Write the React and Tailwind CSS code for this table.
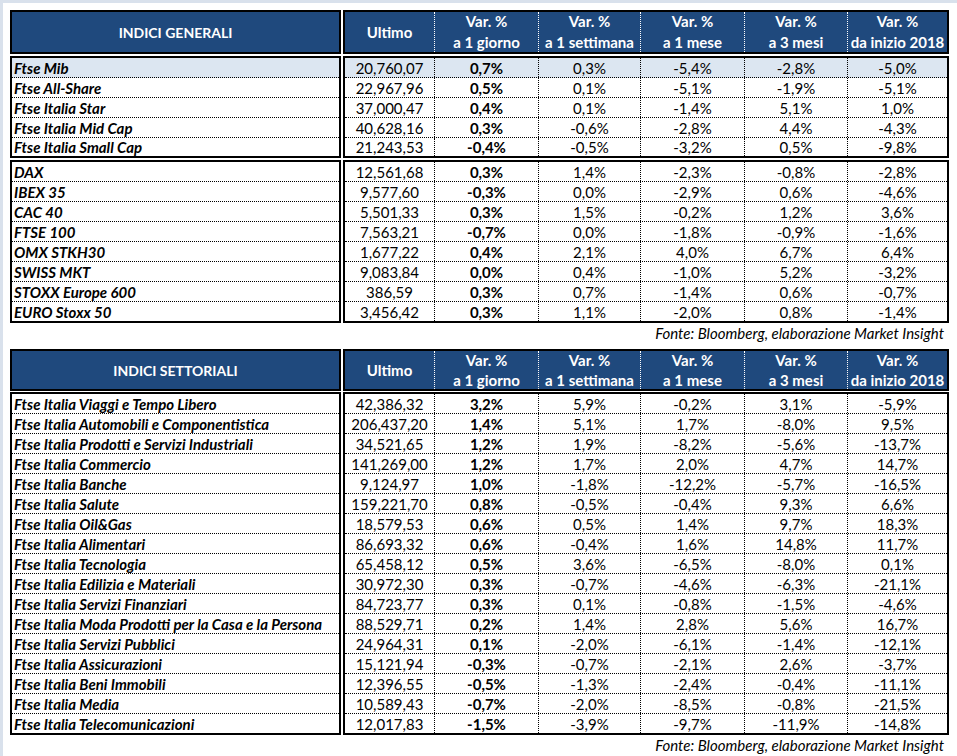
const generali1 = [
  ['Ftse Mib', '20,760,07', '0,7%', '0,3%', '-5,4%', '-2,8%', '-5,0%'],
  ['Ftse All-Share', '22,967,96', '0,5%', '0,1%', '-5,1%', '-1,9%', '-5,1%'],
  ['Ftse Italia Star', '37,000,47', '0,4%', '0,1%', '-1,4%', '5,1%', '1,0%'],
  ['Ftse Italia Mid Cap', '40,628,16', '0,3%', '-0,6%', '-2,8%', '4,4%', '-4,3%'],
  ['Ftse Italia Small Cap', '21,243,53', '-0,4%', '-0,5%', '-3,2%', '0,5%', '-9,8%'],
];

const generali2 = [
  ['DAX', '12,561,68', '0,3%', '1,4%', '-2,3%', '-0,8%', '-2,8%'],
  ['IBEX 35', '9,577,60', '-0,3%', '0,0%', '-2,9%', '0,6%', '-4,6%'],
  ['CAC 40', '5,501,33', '0,3%', '1,5%', '-0,2%', '1,2%', '3,6%'],
  ['FTSE 100', '7,563,21', '-0,7%', '0,0%', '-1,8%', '-0,9%', '-1,6%'],
  ['OMX STKH30', '1,677,22', '0,4%', '2,1%', '4,0%', '6,7%', '6,4%'],
  ['SWISS MKT', '9,083,84', '0,0%', '0,4%', '-1,0%', '5,2%', '-3,2%'],
  ['STOXX Europe 600', '386,59', '0,3%', '0,7%', '-1,4%', '0,6%', '-0,7%'],
  ['EURO Stoxx 50', '3,456,42', '0,3%', '1,1%', '-2,0%', '0,8%', '-1,4%'],
];

const settoriali = [
  ['Ftse Italia Viaggi e Tempo Libero', '42,386,32', '3,2%', '5,9%', '-0,2%', '3,1%', '-5,9%'],
  ['Ftse Italia Automobili e Componentistica', '206,437,20', '1,4%', '5,1%', '1,7%', '-8,0%', '9,5%'],
  ['Ftse Italia Prodotti e Servizi Industriali', '34,521,65', '1,2%', '1,9%', '-8,2%', '-5,6%', '-13,7%'],
  ['Ftse Italia Commercio', '141,269,00', '1,2%', '1,7%', '2,0%', '4,7%', '14,7%'],
  ['Ftse Italia Banche', '9,124,97', '1,0%', '-1,8%', '-12,2%', '-5,7%', '-16,5%'],
  ['Ftse Italia Salute', '159,221,70', '0,8%', '-0,5%', '-0,4%', '9,3%', '6,6%'],
  ['Ftse Italia Oil&Gas', '18,579,53', '0,6%', '0,5%', '1,4%', '9,7%', '18,3%'],
  ['Ftse Italia Alimentari', '86,693,32', '0,6%', '-0,4%', '1,6%', '14,8%', '11,7%'],
  ['Ftse Italia Tecnologia', '65,458,12', '0,5%', '3,6%', '-6,5%', '-8,0%', '0,1%'],
  ['Ftse Italia Edilizia e Materiali', '30,972,30', '0,3%', '-0,7%', '-4,6%', '-6,3%', '-21,1%'],
  ['Ftse Italia Servizi Finanziari', '84,723,77', '0,3%', '0,1%', '-0,8%', '-1,5%', '-4,6%'],
  ['Ftse Italia Moda Prodotti per la Casa e la Persona', '88,529,71', '0,2%', '1,4%', '2,8%', '5,6%', '16,7%'],
  ['Ftse Italia Servizi Pubblici', '24,964,31', '0,1%', '-2,0%', '-6,1%', '-1,4%', '-12,1%'],
  ['Ftse Italia Assicurazioni', '15,121,94', '-0,3%', '-0,7%', '-2,1%', '2,6%', '-3,7%'],
  ['Ftse Italia Beni Immobili', '12,396,55', '-0,5%', '-1,3%', '-2,4%', '-0,4%', '-11,1%'],
  ['Ftse Italia Media', '10,589,43', '-0,7%', '-2,0%', '-8,5%', '-0,8%', '-21,5%'],
  ['Ftse Italia Telecomunicazioni', '12,017,83', '-1,5%', '-3,9%', '-9,7%', '-11,9%', '-14,8%'],
];

const cols = ['w-[89px]', 'w-[104px]', 'w-[102px]', 'w-[104px]', 'w-[103px]', 'flex-1'];

const headCols = [
  ['Ultimo'],
  ['Var. %', 'a 1 giorno'],
  ['Var. %', 'a 1 settimana'],
  ['Var. %', 'a 1 mese'],
  ['Var. %', 'a 3 mesi'],
  ['Var. %', 'da inizio 2018'],
];

function Header({ title, height, lead }) {
  return (
    <div className="flex gap-[2px]">
      <div className={`w-[331px] ${height} border-2 border-black bg-[#1f497d] flex items-center justify-center text-white font-bold text-[14px]`}>
        {title}
      </div>
      <div className={`flex-1 ${height} border-2 border-black bg-[#1f497d] flex text-white font-bold text-[15px]`}>
        {headCols.map((c, i) => (
          <div
            key={i}
            className={`${cols[i]} flex flex-col items-center justify-center ${lead} ${i > 0 ? 'border-l border-dotted border-white' : ''}`}
          >
            {c.map((line) => (
              <span key={line}>{line}</span>
            ))}
          </div>
        ))}
      </div>
    </div>
  );
}

function Group({ rows, highlightFirst = false, lastH = 'h-[19px]' }) {
  const rowClass = (i) => {
    const last = i === rows.length - 1;
    const bg = highlightFirst && i === 0 ? 'bg-[#dce6f1]' : '';
    return `${last ? lastH : 'h-[20px] border-b border-dotted border-black'} ${bg}`;
  };

  return (
    <div className="flex gap-[2px]">
      <div className="w-[331px] border-2 border-black">
        {rows.map((r, i) => (
          <div key={r[0]} className={`${rowClass(i)} flex items-center pl-[2px] font-bold italic leading-[20px] whitespace-nowrap`}>
            {r[0]}
          </div>
        ))}
      </div>
      <div className="flex-1 border-2 border-black">
        {rows.map((r, i) => (
          <div key={r[0]} className={`${rowClass(i)} flex leading-[20px]`}>
            {r.slice(1).map((v, j) => (
              <div
                key={j}
                className={`${cols[j]} flex items-center justify-center ${j === 1 ? 'font-bold' : ''} ${j > 0 ? 'border-l border-dotted border-black' : ''}`}
              >
                {v}
              </div>
            ))}
          </div>
        ))}
      </div>
    </div>
  );
}

function Fonte({ height }) {
  return (
    <div className={`${height} text-right pr-[5px] italic leading-[20px]`}>
      Fonte: Bloomberg, elaborazione Market Insight
    </div>
  );
}

export default function App() {
  return (
    <div className="w-[957px] h-[756px] overflow-hidden bg-white border-t-[3px] border-l-[3px] border-[#d9e1ec] pt-[7px] pl-[7px] text-black text-[15px] font-['Lato','Liberation_Sans',sans-serif]">
      <div className="w-[939px] flex flex-col">
        <Header title="INDICI GENERALI" height="h-[44px]" lead="leading-[21px]" />
        <div className="h-[2px]" />
        <Group rows={generali1} highlightFirst lastH="h-[18px]" />
        <div className="h-[2px]" />
        <Group rows={generali2} />
        <Fonte height="h-[26px]" />

        <Header title="INDICI SETTORIALI" height="h-[42px]" lead="leading-[20px]" />
        <div className="h-[1px]" />
        <Group rows={settoriali} />
        <Fonte height="h-[20px]" />
      </div>
    </div>
  );
}
